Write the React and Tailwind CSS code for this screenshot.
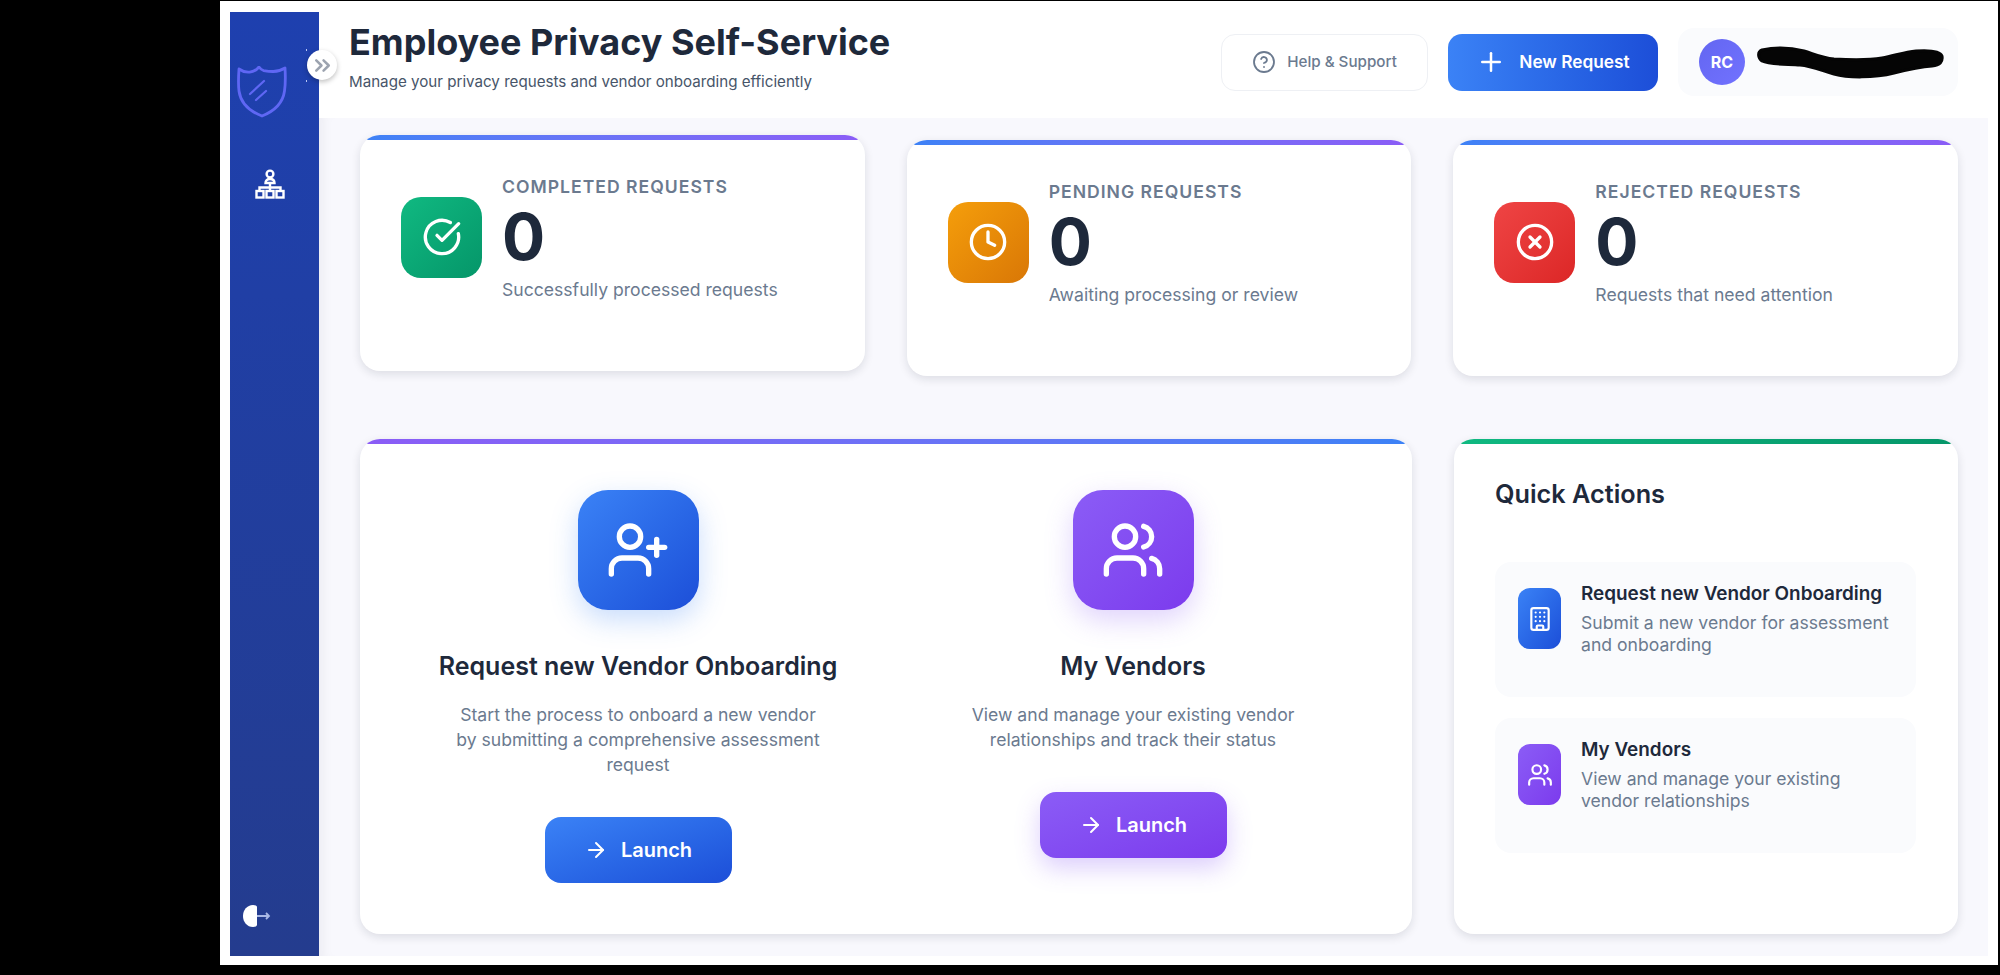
import { UserPlus, Users, ArrowRight, Plus, CircleHelp, CircleCheckBig, Clock, CircleX, Building, ChevronsRight } from 'lucide-react';

const STATS = [
  { label: 'Completed Requests', sub: 'Successfully processed requests', icon: CircleCheckBig, bg: 'bg-gradient-to-br from-[#10b981] to-[#059669]', lift: '-translate-y-[5px]' },
  { label: 'Pending Requests', sub: 'Awaiting processing or review', icon: Clock, bg: 'bg-gradient-to-br from-[#f59e0b] to-[#d97706]', lift: '' },
  { label: 'Rejected Requests', sub: 'Requests that need attention', icon: CircleX, bg: 'bg-gradient-to-br from-[#ef4444] to-[#dc2626]', lift: '' },
];

function ShieldLogo() {
  return (
    <svg width="50" height="52" viewBox="0 0 50 52" fill="none" stroke="#5f67f4" strokeWidth="2.800" strokeLinecap="round" strokeLinejoin="round">
      <path d="M2 3c7 5 15 4 20-2 1.500 2 3 3 4.500 3.500C32 5.500 40 7 48 2c.5 8 .5 16-.5 23-1.500 11-10 20-22.500 25C12 45 3.500 36 2 25 1 17 1.500 10 2 3z" />
      <path d="M13 28 27 15M19 34l10-9" strokeWidth="2.200" />
    </svg>
  );
}

function OrgIcon() {
  return (
    <svg width="30" height="30" viewBox="0 0 30 30" fill="none" stroke="#fff" strokeWidth="2.400">
      <circle cx="15" cy="5" r="3.400" />
      <path d="M10.500 14c0-2.500 1.500-4 4.500-4s4.500 1.500 4.500 4z" />
      <path d="M15 14v4M4.500 22v-3.500h21V22M15 18v4" />
      <rect x="1.500" y="22" width="7" height="6.500" />
      <rect x="11.500" y="22" width="7" height="6.500" />
      <rect x="21.500" y="22" width="7" height="6.500" />
    </svg>
  );
}

function LogoutIcon() {
  return (
    <svg width="28" height="22" viewBox="0 0 28 22">
      <path d="M10 0c2 0 4 1 4 2v18c0 1-2 2-4 2C4 22 0 17 0 11S4 0 10 0z" fill="#fff" />
      <path d="M14 11h12M23 8l3 3-3 3" stroke="#a9b8e6" strokeWidth="1.800" fill="none" />
    </svg>
  );
}

function Redaction() {
  return (
    <svg width="194" height="34" viewBox="0 0 194 34">
      <path d="M8 5c14-3 30-2 42 1 10 3 18 7 30 8 18 1 36 1 48-1 12-2 22-6 34-7 14-1 24 0 26 5 1 6-2 9-10 10-14 1-26 4-38 7-20 5-46 5-60 1-14-4-22-8-34-9-12-1-30 0-38-4C4 13 3 7 8 5z" fill="#050505" stroke="#050505" strokeWidth="3" strokeLinejoin="round" />
    </svg>
  );
}

function TopBar({ colors }) {
  return <div className={`h-[5px] shrink-0 ${colors}`} />;
}

function StatCard({ s }) {
  const Icon = s.icon;
  return (
    <div className={`h-[236px] bg-white rounded-[20px] overflow-hidden shadow-[0_3px_10px_rgba(15,23,42,0.12)] flex flex-col ${s.lift}`}>
      <TopBar colors="bg-gradient-to-r from-[#3b82f6] to-[#8b5cf6]" />
      <div className="flex items-center gap-5 pl-[41px] pt-[35px]">
        <div className={`w-[81px] h-[81px] mb-[3px] rounded-[20px] flex items-center justify-center text-white ${s.bg}`}>
          <Icon size={40} strokeWidth={2} />
        </div>
        <div>
          <p className="text-[17.600px] leading-[24px] font-semibold uppercase tracking-[1px] text-[#6b7a8f]">{s.label}</p>
          <p className="mt-[2.500px] text-[64px] leading-[70px] font-bold text-[#1e293b]">0</p>
          <p className="mt-[5px] text-[17.600px] leading-[26px] text-[#6b7a8f]">{s.sub}</p>
        </div>
      </div>
    </div>
  );
}

function Feature({ icon: Icon, title, desc, tile, shadow, btnShadow }) {
  return (
    <div className="flex flex-col items-center">
      <div className={`w-[121px] h-[120px] rounded-[30px] flex items-center justify-center text-white ${tile} ${shadow}`}>
        <Icon size={64} strokeWidth={2} />
      </div>
      <h3 className="mt-[40px] text-[25px] leading-[32px] font-semibold text-[#1e293b]">{title}</h3>
      <p className="mt-[20px] w-[375px] text-center text-[17.600px] leading-[25px] text-[#6b7a8f]">{desc}</p>
      <button className={`mt-[40px] w-[187px] h-[66px] rounded-[16px] flex items-center justify-center gap-[13px] text-white text-[20px] font-semibold ${tile} ${btnShadow}`}>
        <ArrowRight size={24} strokeWidth={2} />
        Launch
      </button>
    </div>
  );
}

function QuickItem({ icon: Icon, title, desc, tile }) {
  return (
    <div className="h-[135px] rounded-[16px] bg-[#fafbfd] flex pl-[23px] pr-[20px] pt-[20px] gap-[20px]">
      <div className={`w-[43px] h-[61px] mt-[6px] shrink-0 rounded-[12px] flex items-center justify-center text-white ${tile}`}>
        <Icon size={26} strokeWidth={2} />
      </div>
      <div>
        <p className="text-[18.900px] leading-[24px] font-semibold text-[#1e293b]">{title}</p>
        <p className="mt-[5.500px] text-[17.600px] leading-[22px] text-[#6b7a8f]">{desc}</p>
      </div>
    </div>
  );
}

export default function App() {
  const blue = 'bg-gradient-to-br from-[#3b82f6] to-[#1d4ed8]';
  const violet = 'bg-gradient-to-br from-[#8b5cf6] to-[#7c3aed]';

  return (
    <div className="h-[975px] bg-black pl-[220px] pr-[2px] pt-[1px] pb-[10px] font-['Inter',sans-serif]">
      <div className="h-full bg-white flex pl-[10px] pr-[10px] pt-[11px] pb-[9px]">
        {/* Sidebar */}
        <aside className="relative w-[89px] shrink-0 bg-gradient-to-b from-[#1e40af] to-[#243c8e] flex flex-col">
          <div className="ml-[7px] mt-[54px]"><ShieldLogo /></div>
          <div className="ml-[25px] mt-[51px]"><OrgIcon /></div>
          <div className="ml-[13px] mt-auto mb-[29px]"><LogoutIcon /></div>
          <span className="absolute left-[76px] top-[37px] w-px h-[2px] bg-[#b9c6f5]" />
          <span className="absolute left-[76px] top-[68px] w-px h-[2px] bg-[#b9c6f5]" />
          <button className="absolute left-[77px] top-[38px] w-[30px] h-[30px] rounded-full bg-white shadow-[0_2px_5px_rgba(0,0,0,0.25)] flex items-center justify-center text-[#9ca3af]">
            <ChevronsRight size={25} strokeWidth={2.400} />
          </button>
        </aside>

        <div className="flex-1 min-w-0 flex flex-col">
          {/* Header */}
          <header className="h-[106px] shrink-0 bg-white flex items-center pl-[30px] pr-[30px] pb-[6px]">
            <div className="flex-1 pb-[12px]">
              <h1 className="text-[36px] leading-[44px] font-bold text-[#1e293b]">Employee Privacy Self-Service</h1>
              <p className="mt-[8px] text-[15.150px] leading-[20px] text-[#475569]">Manage your privacy requests and vendor onboarding efficiently</p>
            </div>
            <div className="flex items-center">
              <button className="w-[207px] h-[57px] rounded-[14px] bg-white border border-[#eef0f4] flex items-center justify-center gap-[11px] text-[15.200px] font-medium text-[#6b7a8f]">
                <CircleHelp size={24} strokeWidth={1.800} />
                Help & Support
              </button>
              <button className="ml-[20px] w-[210px] h-[57px] rounded-[14px] bg-gradient-to-r from-[#3b82f6] to-[#1d4ed8] flex items-center justify-center gap-[13px] text-[17.300px] font-semibold text-white">
                <Plus size={30} strokeWidth={2} />
                New Request
              </button>
              <div className="ml-[20px] w-[280px] h-[68px] rounded-[16px] bg-[#fafbfd] flex items-center pl-[21px]">
                <div className="w-[46px] h-[46px] rounded-full bg-gradient-to-br from-[#6366f1] to-[#7272ff] flex items-center justify-center text-white text-[16px] font-bold">RC</div>
                <div className="ml-[9px]"><Redaction /></div>
              </div>
            </div>
          </header>

          {/* Main */}
          <main className="flex-1 bg-[#f8f8fd] shadow-[inset_12px_0_12px_-8px_rgba(15,23,42,0.05)] pl-[41px] pr-[30px] pt-[22px] pb-[22px] flex flex-col gap-[63px]">
            <div className="grid grid-cols-3 gap-[42px]">
              {STATS.map(s => <StatCard key={s.label} s={s} />)}
            </div>

            <div className="flex-1 grid grid-cols-[1052px_1fr] gap-[42px]">
              <div className="bg-white rounded-[20px] overflow-hidden shadow-[0_3px_10px_rgba(15,23,42,0.12)]">
                <TopBar colors="bg-gradient-to-r from-[#8b5cf6] to-[#3b82f6]" />
                <div className="grid grid-cols-2 gap-[33px] pl-[47px] pr-[48px] pt-[46px]">
                  <Feature
                    icon={UserPlus}
                    title="Request new Vendor Onboarding"
                    desc="Start the process to onboard a new vendor by submitting a comprehensive assessment request"
                    tile={blue}
                    shadow="shadow-[0_10px_28px_rgba(59,130,246,0.28)]"
                    btnShadow=""
                  />
                  <Feature
                    icon={Users}
                    title="My Vendors"
                    desc="View and manage your existing vendor relationships and track their status"
                    tile={violet}
                    shadow="shadow-[0_10px_28px_rgba(139,92,246,0.28)]"
                    btnShadow="shadow-[0_10px_24px_rgba(139,92,246,0.3)]"
                  />
                </div>
              </div>

              <div className="bg-white rounded-[20px] overflow-hidden shadow-[0_3px_10px_rgba(15,23,42,0.12)]">
                <TopBar colors="bg-gradient-to-r from-[#10b981] to-[#059669]" />
                <div className="pl-[41px] pr-[42px] pt-[34px]">
                  <h2 className="text-[25.250px] leading-[32px] font-semibold text-[#1e293b]">Quick Actions</h2>
                  <div className="mt-[52px] flex flex-col gap-[21px]">
                    <QuickItem icon={Building} title="Request new Vendor Onboarding" desc="Submit a new vendor for assessment and onboarding" tile={blue} />
                    <QuickItem icon={Users} title="My Vendors" desc="View and manage your existing vendor relationships" tile={violet} />
                  </div>
                </div>
              </div>
            </div>
          </main>
        </div>
      </div>
    </div>
  );
}
